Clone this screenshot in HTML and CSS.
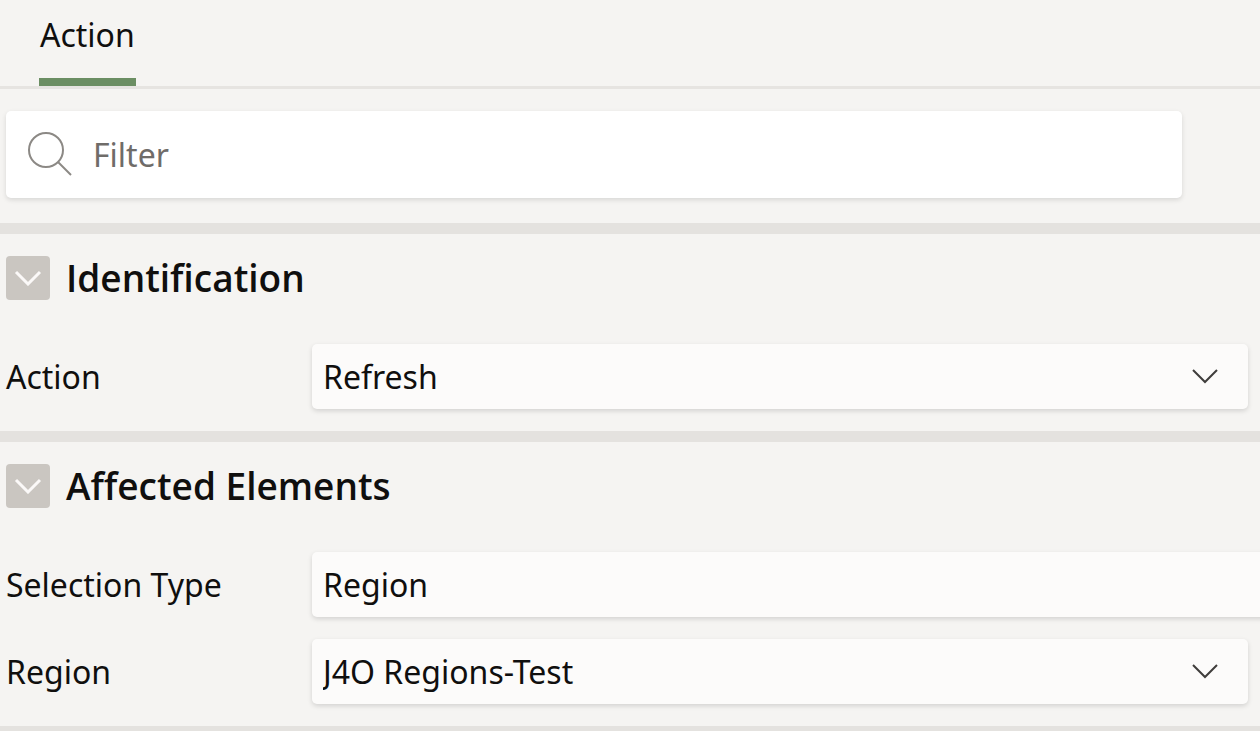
FILE: index.html
```html
<!DOCTYPE html>
<html lang="en">
<head>
  <meta charset="UTF-8" />
  <meta name="viewport" content="width=device-width, initial-scale=1.0"/>
  <title>Action</title>
  <link rel="stylesheet" href="styles.css">
</head>
<body>

  <main class="panel">
    <nav class="tabs">
      <a class="tab" href="#properties">Action</a>
    </nav>

    <div class="toolbar">
      <label class="filter">
        <svg class="filter-icon" viewBox="0 0 46 46" aria-hidden="true">
          <circle cx="19" cy="18" r="17"/>
          <path d="M31 30 L44 43"/>
        </svg>
        <input class="filter-input" type="text" placeholder="Filter" aria-label="Filter">
      </label>
    </div>

    <section class="group" id="properties">
      <div class="group-header">
        <button class="toggle" type="button" aria-expanded="true" aria-label="Collapse Identification">
          <svg class="chevron" viewBox="0 0 28 16" aria-hidden="true"><path d="M2 2 L14 14 L26 2"/></svg>
        </button>
        <h2>Identification</h2>
      </div>
      <div class="rows">
        <div class="row">
          <label for="action">Action</label>
          <div class="field">
            <select id="action">
              <option>Refresh</option>
            </select>
            <svg class="chevron" viewBox="0 0 28 16" aria-hidden="true"><path d="M2 1 L14 13 L26 1"/></svg>
          </div>
        </div>
      </div>
    </section>

    <section class="group">
      <div class="group-header">
        <button class="toggle" type="button" aria-expanded="true" aria-label="Collapse Affected Elements">
          <svg class="chevron" viewBox="0 0 28 16" aria-hidden="true"><path d="M2 2 L14 14 L26 2"/></svg>
        </button>
        <h2>Affected Elements</h2>
      </div>
      <div class="rows">
        <div class="row">
          <label for="selection-type">Selection Type</label>
          <div class="field field-wide">
            <select id="selection-type">
              <option>Region</option>
            </select>
            <svg class="chevron" viewBox="0 0 28 16" aria-hidden="true"><path d="M2 1 L14 13 L26 1"/></svg>
          </div>
        </div>
        <div class="row">
          <label for="region">Region</label>
          <div class="field">
            <select id="region">
              <option>J4O Regions-Test</option>
            </select>
            <svg class="chevron" viewBox="0 0 28 16" aria-hidden="true"><path d="M2 1 L14 13 L26 1"/></svg>
          </div>
        </div>
      </div>
    </section>
  </main>

</body>
</html>
```
FILE: styles.css
```css
* {margin: 0;padding: 0;box-sizing: border-box;}

body {
  font-family: "Noto Sans", "Open Sans", sans-serif;
  font-size: 32px;
  line-height: 44px;
  background: #f5f4f2;
  color: #100f0e;
}

input, select, button {font: inherit;color: inherit;border: none;}

.panel {
  height: 100vh;
  overflow: hidden;
}

/* Tabs */
.tabs {
  display: flex;
  padding-left: 39px;
  border-bottom: 3px solid #e6e4e1;
}

.tab {
  padding: 13px 1px 21px;
  border-bottom: 8px solid #6b8e63;
  color: inherit;
  text-decoration: none;
}

/* Filter */
.toolbar {
  padding: 22px 78px 25px 6px;
}

.filter {
  display: flex;
  align-items: center;
  gap: 20px;
  height: 87px;
  padding: 0 21px;
  background: #fff;
  border-radius: 5px;
  box-shadow: 0 2px 5px rgba(0, 0, 0, 0.12);
}

.filter-icon {
  flex: none;
  width: 46px;
  height: 46px;
  fill: none;
  stroke: #8c8985;
  stroke-width: 2;
}

.filter-input {
  flex: 1;
  min-width: 0;
  background: none;
  outline: none;
}

.filter-input::placeholder {color: #6f6c69;opacity: 1;}

/* Property groups */
.group {
  padding: 22px 12px 22px 6px;
  border-top: 11px solid #e4e2df;
}

.group:last-child {border-bottom: 11px solid #e4e2df;}

.group-header {
  display: flex;
  align-items: center;
  gap: 16px;
  margin-bottom: 44px;
}

.group-header h2 {
  font-family: "Open Sans", "Noto Sans", sans-serif;
  font-size: 37px;
  font-weight: 600;
}

.toggle {
  display: flex;
  align-items: center;
  justify-content: center;
  width: 44px;
  height: 44px;
  background: #cac6c1;
  border-radius: 4px;
  cursor: pointer;
}

.chevron {
  width: 28px;
  height: 16px;
  fill: none;
  stroke: #3f3d3b;
  stroke-width: 2;
}

.toggle .chevron {stroke: #fbf9f8;stroke-width: 3;}

.rows {
  display: grid;
  gap: 22px;
}

.row {
  display: grid;
  grid-template-columns: 306px minmax(0, 1fr);
  align-items: center;
}

.field {
  display: grid;
  align-items: center;
}

/* runs past the right edge of the panel */
.field-wide {margin-right: -90px;}

.field select, .field .chevron {grid-area: 1 / 1;}

.field .chevron {
  justify-self: end;
  margin-right: 29px;
  pointer-events: none;
}

.field select {
  width: 100%;
  height: 65px;
  padding: 0 80px 0 11px;
  appearance: none;
  background: #fcfbfa;
  border-radius: 5px;
  box-shadow: 0 2px 5px rgba(0, 0, 0, 0.14);
}
```
